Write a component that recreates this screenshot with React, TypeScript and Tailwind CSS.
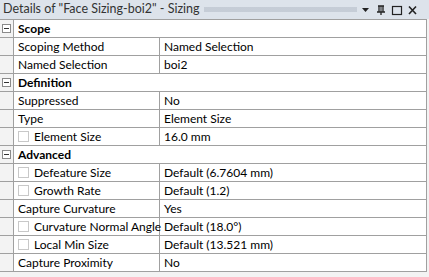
import React from "react";

type Row =
  | { kind: "group"; label: string }
  | { kind: "prop"; label: string; value: string; check?: boolean };

const rows: Row[] = [
  { kind: "group", label: "Scope" },
  { kind: "prop", label: "Scoping Method", value: "Named Selection" },
  { kind: "prop", label: "Named Selection", value: "boi2" },
  { kind: "group", label: "Definition" },
  { kind: "prop", label: "Suppressed", value: "No" },
  { kind: "prop", label: "Type", value: "Element Size" },
  { kind: "prop", label: "Element Size", value: "16.0 mm", check: true },
  { kind: "group", label: "Advanced" },
  { kind: "prop", label: "Defeature Size", value: "Default (6.7604 mm)", check: true },
  { kind: "prop", label: "Growth Rate", value: "Default (1.2)", check: true },
  { kind: "prop", label: "Capture Curvature", value: "Yes" },
  { kind: "prop", label: "Curvature Normal Angle", value: "Default (18.0°)", check: true },
  { kind: "prop", label: "Local Min Size", value: "Default (13.521 mm)", check: true },
  { kind: "prop", label: "Capture Proximity", value: "No" },
];

function Minus() {
  return (
    <div className="w-[9px] h-[9px] border border-[#8a8a8a] bg-white flex items-center justify-center">
      <div className="w-[5px] h-px bg-[#333]" />
    </div>
  );
}

export default function App() {
  return (
    <div
      className="w-[429px] h-[277px] bg-[#f3f3f3] flex flex-col text-[12px] text-black overflow-hidden"
      style={{ fontFamily: '"Segoe UI", Lato, "Liberation Sans", sans-serif' }}
    >
      <div className="h-[19px] bg-[#dde3eb] flex items-center pl-[3px] pr-[8px] shrink-0">
        <span className="text-[#333] text-[12.5px] whitespace-nowrap leading-none">
          Details of "Face Sizing-boi2" - Sizing
        </span>
        <div
          className="flex-1 h-[5px] mx-[4px]"
          style={{
            backgroundImage:
              "radial-gradient(circle, #a9b2bf 0.6px, transparent 0.8px)",
            backgroundSize: "2px 2px",
          }}
        />
        <svg width="60" height="12" viewBox="0 0 60 12" className="shrink-0">
          <path d="M1 4 L8 4 L4.5 8 Z" fill="#222" />
          <path d="M17 2 H23 M18 2 V8 M22 2 V8 M16 8 H24 M20 8 V11" stroke="#222" strokeWidth="1.3" fill="none" />
          <path d="M20 2 V8" stroke="#222" strokeWidth="1" />
          <rect x="31.5" y="2.5" width="9" height="8" fill="none" stroke="#222" strokeWidth="1.2" />
          <path d="M48 2.5 L55 10 M55 2.5 L48 10" stroke="#222" strokeWidth="1.6" />
        </svg>
      </div>
      <div className="flex flex-col bg-white w-[427px] border-t border-[#a0a0a0]">
        {rows.map((r, i) =>
          r.kind === "group" ? (
            <div key={i} className="h-[18px] flex border-b border-[#a0a0a0] bg-white">
              <div className="w-[13px] flex items-center justify-center bg-[#f3f3f3]">
                <Minus />
              </div>
              <div className="flex-1 flex items-center pl-[4px] font-bold border-l border-[#a0a0a0] border-r">
                {r.label}
              </div>
            </div>
          ) : (
            <div key={i} className="h-[18px] flex border-b border-[#a0a0a0]">
              <div className="w-[13px] bg-[#f3f3f3]" />
              <div className="w-[147px] flex items-center pl-[4px] border-l border-r border-[#a0a0a0] whitespace-nowrap">
                {r.check && (
                  <div className="w-[11px] h-[11px] border border-[#c8c8c8] bg-white mr-[5px] shrink-0" />
                )}
                {r.label}
              </div>
              <div className="flex-1 flex items-center pl-[4px] border-r border-[#a0a0a0] whitespace-nowrap">
                {r.value}
              </div>
            </div>
          )
        )}
      </div>
    </div>
  );
}
